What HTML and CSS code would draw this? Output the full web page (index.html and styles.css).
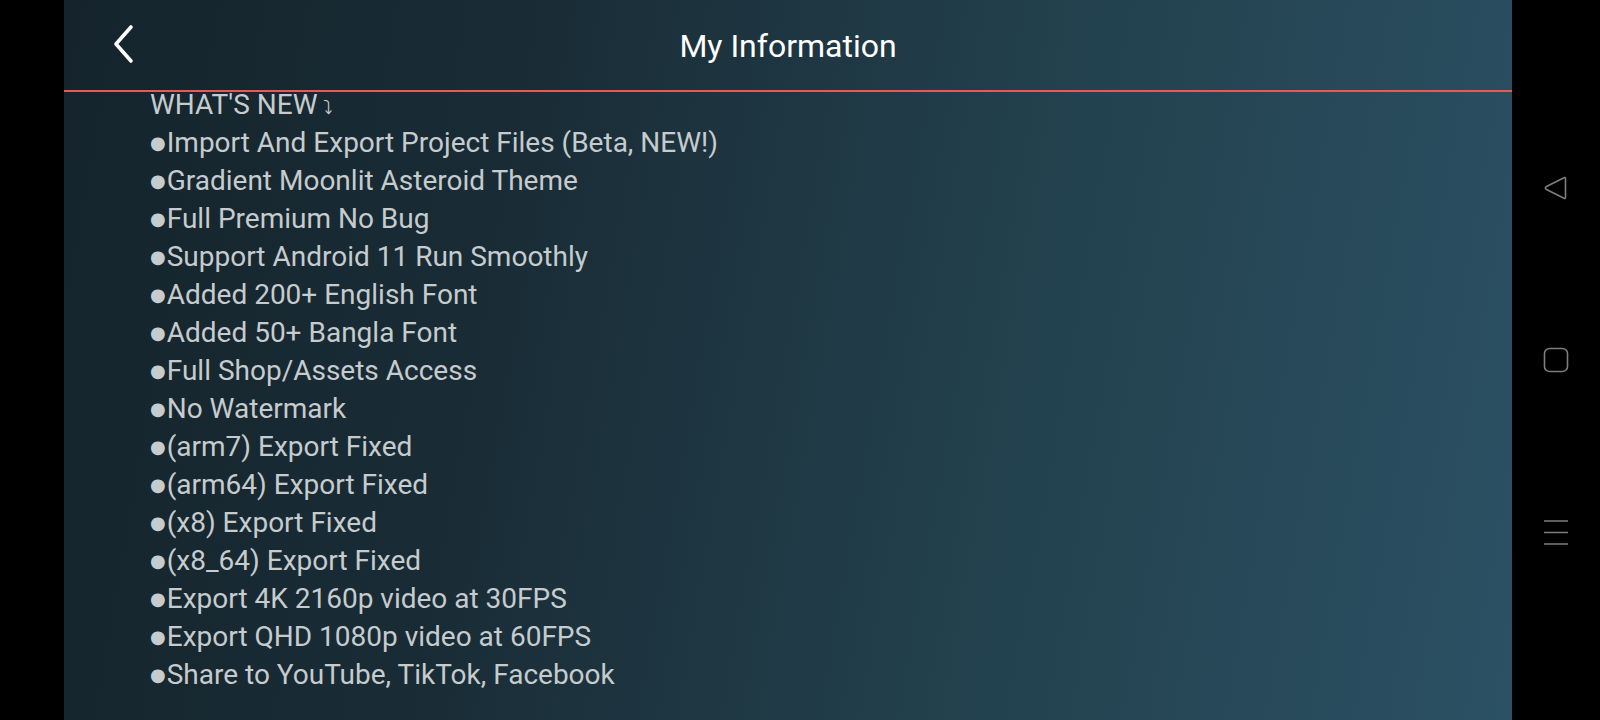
FILE: index.html
```html
<!DOCTYPE html>
<html>
<head>
<meta charset="utf-8">
<link rel="stylesheet" href="styles.css">
</head>
<body>
<div class="screen">
  <div class="app">
    <header class="topbar">
      <svg class="back" width="24" height="40" viewBox="0 0 24 40"><path d="M19 3 L4 20 L19 37" fill="none" stroke="#ffffff" stroke-width="3.6" stroke-linecap="round" stroke-linejoin="round"/></svg>
      <h1 class="title">My Information</h1>
    </header>
    <div class="content">
      <div class="line">WHAT'S NEW<span class="arrow">⤵</span></div>
      <div class="line"><span class="dot">●</span>Import And Export Project Files (Beta, NEW!)</div>
      <div class="line"><span class="dot">●</span>Gradient Moonlit Asteroid Theme</div>
      <div class="line"><span class="dot">●</span>Full Premium No Bug</div>
      <div class="line"><span class="dot">●</span>Support Android 11 Run Smoothly</div>
      <div class="line"><span class="dot">●</span>Added 200+ English Font</div>
      <div class="line"><span class="dot">●</span>Added 50+ Bangla Font</div>
      <div class="line"><span class="dot">●</span>Full Shop/Assets Access</div>
      <div class="line"><span class="dot">●</span>No Watermark</div>
      <div class="line"><span class="dot">●</span>(arm7) Export Fixed</div>
      <div class="line"><span class="dot">●</span>(arm64) Export Fixed</div>
      <div class="line"><span class="dot">●</span>(x8) Export Fixed</div>
      <div class="line"><span class="dot">●</span>(x8_64) Export Fixed</div>
      <div class="line"><span class="dot">●</span>Export 4K 2160p video at 30FPS</div>
      <div class="line"><span class="dot">●</span>Export QHD 1080p video at 60FPS</div>
      <div class="line"><span class="dot">●</span>Share to YouTube, TikTok, Facebook</div>
    </div>
  </div>
  <nav class="navbar">
    <svg class="nav-icon" width="26" height="26" viewBox="0 0 26 26"><path d="M22.5 3.5 L22.5 22.5 Q22.5 24 21 23.2 L3 14.2 Q1.8 13 3 11.8 L21 2.8 Q22.5 2 22.5 3.5 Z" fill="none" stroke="#7d7d7d" stroke-width="1.6" stroke-linejoin="round"/></svg>
    <svg class="nav-icon" width="26" height="26" viewBox="0 0 26 26"><rect x="1.5" y="1.5" width="23" height="23" rx="5" fill="none" stroke="#7d7d7d" stroke-width="1.6"/></svg>
    <svg class="nav-icon" width="26" height="26" viewBox="0 0 26 26"><path d="M1 2 H25 M1 13.5 H25 M1 25 H25" fill="none" stroke="#7d7d7d" stroke-width="1.6"/></svg>
  </nav>
</div>
</body>
</html>
```

FILE: styles.css
```css
html, body {
  margin: 0;
  padding: 0;
  background: #000;
}
.screen {
  width: 1600px;
  height: 720px;
  display: flex;
  overflow: hidden;
  background: #000;
}
.app {
  margin-left: 64px;
  width: 1448px;
  height: 720px;
  background: linear-gradient(100deg, #15242c 0%, #192c36 30%, #23414e 65%, #2b5164 100%);
  overflow: hidden;
  font-family: Roboto, "Noto Sans", sans-serif;
}
.topbar {
  height: 90px;
  border-bottom: 2px solid #e25a5a;
  display: flex;
  align-items: center;
  position: relative;
  z-index: 1;
}
.back {
  margin-left: 48px;
  margin-top: -2px;
}
.title {
  position: absolute;
  left: 0;
  right: 0;
  top: 27px;
  margin: 0;
  text-align: center;
  font-weight: 400;
  font-size: 32px;
  line-height: 38px;
  color: #ffffff;
}
.content {
  margin-top: -6px;
  padding-left: 86px;
  color: #c6cbce;
  font-size: 28px;
  line-height: 38px;
}
.line {
  white-space: nowrap;
  height: 38px;
}
.dot {
  font-family: "DejaVu Sans", sans-serif;
  font-size: 18px;
  line-height: 1;
  margin-right: 1px;
  vertical-align: 3px;
}
.arrow {
  font-family: "DejaVu Sans", sans-serif;
  font-size: 19px;
  line-height: 1;
  margin-left: 6px;
}
.navbar {
  flex: 1;
  display: flex;
  flex-direction: column;
  align-items: center;
  padding-top: 175px;
  gap: 146px;
}
.nav-icon {
  display: block;
}
```
